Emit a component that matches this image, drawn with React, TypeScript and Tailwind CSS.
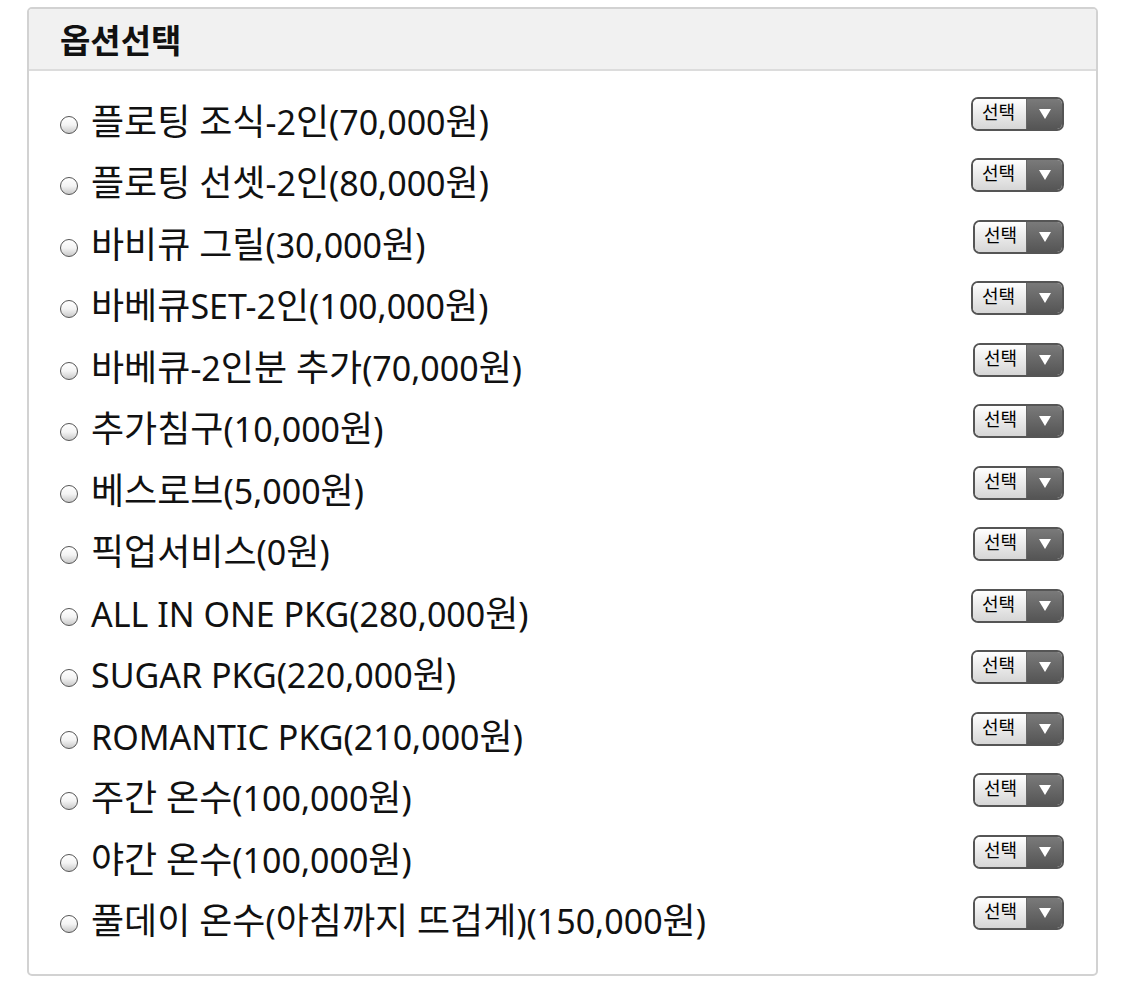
import React from 'react';

interface OptionItem {
  label: string;
  wide: boolean;
}

const options: OptionItem[] = [
  { label: '플로팅 조식-2인(70,000원)', wide: true },
  { label: '플로팅 선셋-2인(80,000원)', wide: true },
  { label: '바비큐 그릴(30,000원)', wide: false },
  { label: '바베큐SET-2인(100,000원)', wide: true },
  { label: '바베큐-2인분 추가(70,000원)', wide: false },
  { label: '추가침구(10,000원)', wide: false },
  { label: '베스로브(5,000원)', wide: false },
  { label: '픽업서비스(0원)', wide: false },
  { label: 'ALL IN ONE PKG(280,000원)', wide: true },
  { label: 'SUGAR PKG(220,000원)', wide: true },
  { label: 'ROMANTIC PKG(210,000원)', wide: true },
  { label: '주간 온수(100,000원)', wide: false },
  { label: '야간 온수(100,000원)', wide: false },
  { label: '풀데이 온수(아침까지 뜨겁게)(150,000원)', wide: false },
];

// hangul glyphs render wider in the original, so they get a slightly bigger size
function MixedText({ text }: { text: string }) {
  const parts = text.split(/([\uAC00-\uD7A3]+)/).filter(Boolean);
  return (
    <>
      {parts.map((p, i) =>
        /[\uAC00-\uD7A3]/.test(p) ? (
          <span key={i} className="text-[36px]" style={{ fontFamily: '"Noto Sans CJK KR", sans-serif' }}>
            {p}
          </span>
        ) : (
          <span key={i}>{p}</span>
        )
      )}
    </>
  );
}

function SelectButton({ wide }: { wide: boolean }) {
  return (
    <div
      className={`flex h-[34px] overflow-hidden rounded-[7px] border-2 border-[#555] ${
        wide ? 'w-[93px]' : 'w-[91px]'
      }`}
    >
      <div className="flex flex-1 items-start bg-gradient-to-b from-white to-[#d6d6d6] pl-[9px] pt-[2px] text-[18px] leading-[22px] text-black">
        선택
      </div>
      <div className="flex w-[36px] items-center justify-center border-l border-[#666] bg-gradient-to-b from-[#7a7a7a] to-[#555]">
        <svg width="12" height="10" viewBox="0 0 12 10">
          <polygon points="0,0 12,0 6,10" fill="#fff" />
        </svg>
      </div>
    </div>
  );
}

export default function App() {
  return (
    <div
      className="min-h-[982px] bg-white pl-[27px] pr-[27px] pt-[7px]"
      style={{ fontFamily: '"Noto Sans", "Noto Sans CJK KR", sans-serif' }}
    >
      <div className="w-[1071px] overflow-hidden rounded-[5px] border-2 border-[#d2d2d2]">
        <div className="flex h-[62px] items-center border-b-2 border-[#dcdcdc] bg-[#f1f1f1] pl-[31px]">
          <h2
            className="text-[33px] font-bold leading-none text-[#111]"
            style={{ fontFamily: '"Noto Sans CJK KR", sans-serif' }}
          >
            옵션선택
          </h2>
        </div>
        <ul className="pb-[21px] pl-[31px] pr-[31px] pt-[21px]">
          {options.map((opt, idx) => (
            <li key={idx} className="flex h-[61.5px] items-center justify-between">
              <div className="flex items-center">
                <span className="mr-[13px] mt-[4px] box-border block h-[18px] w-[18px] min-w-[18px] shrink-0 rounded-full border-[1.5px] border-[#555] bg-gradient-to-b from-white via-[#f4f4f4] to-[#c9c9c9]" />
                <span className="mb-[6px] text-[34px] leading-none text-[#111]">
                  <MixedText text={opt.label} />
                </span>
              </div>
              <div className="mb-[18px] mr-[1px] flex">
                <SelectButton wide={opt.wide} />
              </div>
            </li>
          ))}
        </ul>
      </div>
    </div>
  );
}
